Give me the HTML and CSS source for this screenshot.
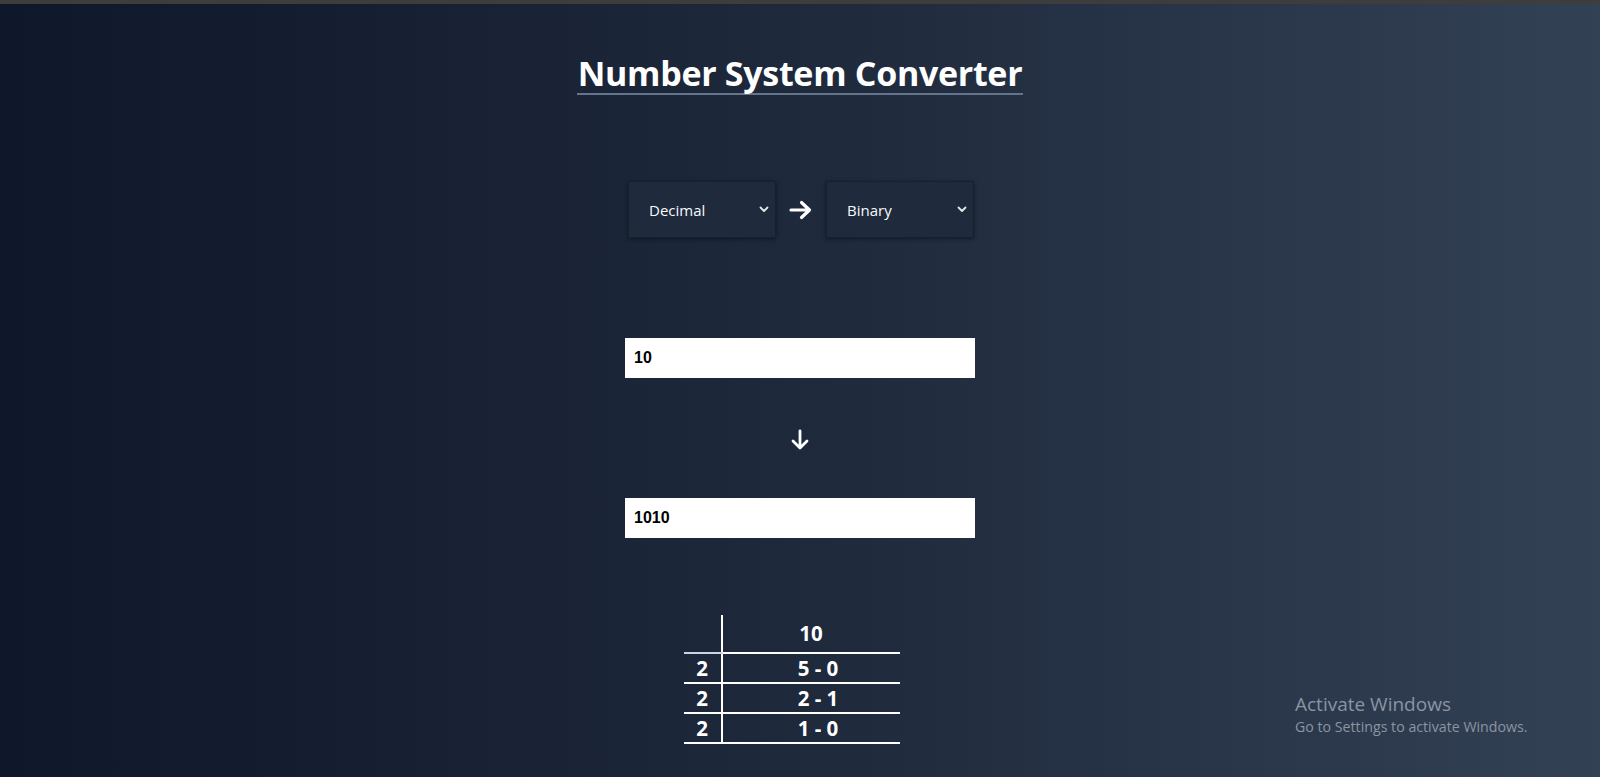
FILE: index.html
```html
<!DOCTYPE html>
<html lang="en">
<head>
<meta charset="utf-8">
<title>Number System Converter</title>
<link rel="stylesheet" href="styles.css">
</head>
<body>
<div class="topbar"></div>
<main class="app">
  <h1 class="title">Number System Converter</h1>

  <div class="selectors">
    <div class="select-wrap">
      <select class="select">
        <option selected>Decimal</option>
        <option>Binary</option>
        <option>Octal</option>
        <option>Hexadecimal</option>
      </select>
      <svg class="chev" width="10" height="7" viewBox="0 0 10 7"><path d="M1.5 1.5 L5 5 L8.5 1.5" fill="none" stroke="#e5e7eb" stroke-width="1.8" stroke-linecap="round" stroke-linejoin="round"/></svg>
    </div>
    <svg class="arrow-right" width="24" height="20" viewBox="0 0 24 20"><path d="M2 10 H20 M12.5 2.5 L20.5 10 L12.5 17.5" fill="none" stroke="#ffffff" stroke-width="3.2" stroke-linecap="round" stroke-linejoin="round"/></svg>
    <div class="select-wrap">
      <select class="select">
        <option>Decimal</option>
        <option selected>Binary</option>
        <option>Octal</option>
        <option>Hexadecimal</option>
      </select>
      <svg class="chev" width="10" height="7" viewBox="0 0 10 7"><path d="M1.5 1.5 L5 5 L8.5 1.5" fill="none" stroke="#e5e7eb" stroke-width="1.8" stroke-linecap="round" stroke-linejoin="round"/></svg>
    </div>
  </div>

  <input class="field field-in" type="text" value="10">

  <svg class="arrow-down" width="20" height="22" viewBox="0 0 20 22"><path d="M10 2 V19 M3 12 L10 19 L17 12" fill="none" stroke="#ffffff" stroke-width="2.8" stroke-linecap="round" stroke-linejoin="round"/></svg>

  <input class="field field-out" type="text" value="1010" readonly>

  <table class="steps">
    <tr class="head"><td class="base"></td><td class="val">10</td></tr>
    <tr><td class="base">2</td><td class="val step">5 - 0</td></tr>
    <tr><td class="base">2</td><td class="val step">2 - 1</td></tr>
    <tr><td class="base">2</td><td class="val step">1 - 0</td></tr>
  </table>
</main>

<div class="watermark">
  <div class="wm-title">Activate Windows</div>
  <div class="wm-sub">Go to Settings to activate Windows.</div>
</div>
</body>
</html>
```

FILE: styles.css
```css
html, body {
  margin: 0;
  padding: 0;
  height: 100%;
}

body {
  background: linear-gradient(to right, #0f172a 0%, #1e293b 50%, #334155 100%);
  font-family: "Open Sans", "Noto Sans", sans-serif;
  color: #ffffff;
  overflow: hidden;
  position: relative;
}

.topbar {
  height: 4px;
  background: #3d3d3d;
}

.app {
  display: flex;
  flex-direction: column;
  align-items: center;
}

.title {
  margin: 50px 0 0 0;
  font-size: 34px;
  font-weight: 700;
  line-height: 39px;
  letter-spacing: -0.3px;
  border-bottom: 2px solid #64748b;
  padding: 0 1px;
}

.selectors {
  margin-top: 86px;
  display: flex;
  align-items: center;
  gap: 13px;
  margin-left: 2px;
}

.select-wrap {
  position: relative;
  width: 148px;
  height: 57px;
}

.select {
  appearance: none;
  -webkit-appearance: none;
  width: 100%;
  height: 100%;
  box-sizing: border-box;
  background: #1f2a3d;
  border: 1px solid #172033;
  box-shadow: 0 1px 4px rgba(0, 0, 0, 0.45);
  color: #f8fafc;
  font-family: "Open Sans", "Noto Sans", sans-serif;
  font-size: 15px;
  padding: 0 0 0 20px;
  outline: none;
}

.chev {
  position: absolute;
  right: 7px;
  top: 25px;
  pointer-events: none;
}

.arrow-right {
  display: block;
}

.field {
  width: 350px;
  height: 40px;
  box-sizing: border-box;
  border: none;
  outline: none;
  background: #ffffff;
  color: #000000;
  font-family: "Liberation Sans", Arial, sans-serif;
  font-weight: 700;
  font-size: 16px;
  padding: 0 9px;
}

.field-in {
  margin-top: 100px;
}

.arrow-down {
  display: block;
  margin-top: 51px;
}

.field-out {
  margin-top: 47px;
}

.steps {
  margin-top: 77px;
  border-collapse: collapse;
  font-family: "Open Sans", "Noto Sans", sans-serif;
  font-weight: 700;
  font-size: 20.5px;
  color: #ffffff;
  margin-left: -17px;
}

.steps td {
  padding: 0;
  text-align: center;
  border-bottom: 2px solid #ffffff;
  height: 28px;
  line-height: 28px;
}

.steps td.base {
  width: 37px;
  border-right: 2px solid #ffffff;
}

.steps td.val {
  width: 177px;
}

.steps td.step {
  padding-left: 14px;
  width: 163px;
}

.steps tr.head td {
  height: 37px;
  line-height: 37px;
  vertical-align: bottom;
}

.steps tr.head td.base {
  border-bottom-color: #cbd5e1;
}

.watermark {
  position: absolute;
  left: 1295px;
  top: 692px;
  color: #8a94a3;
  font-family: "Open Sans", "Noto Sans", sans-serif;
}

.wm-title {
  font-size: 19px;
  line-height: 25px;
}

.wm-sub {
  font-size: 14.2px;
  line-height: 19px;
}
```
